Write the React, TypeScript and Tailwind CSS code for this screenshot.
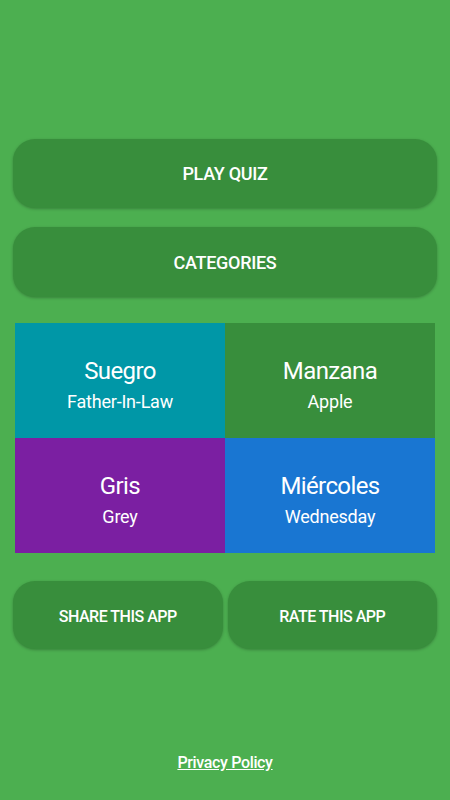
import React from "react";

const cells = [
  { es: "Suegro", en: "Father-In-Law", bg: "bg-[#0097a7]" },
  { es: "Manzana", en: "Apple", bg: "bg-[#388e3c]" },
  { es: "Gris", en: "Grey", bg: "bg-[#7b1fa2]" },
  { es: "Miércoles", en: "Wednesday", bg: "bg-[#1976d2]" },
];

export default function App() {
  return (
    <div
      className="w-[450px] h-[800px] bg-[#4caf50] flex flex-col px-[13px] text-white"
      style={{ fontFamily: "Roboto, 'Liberation Sans', sans-serif" }}
    >
      <div className="h-[139px]" />
      <button className="h-[69px] w-full rounded-[22px] bg-[#388e3c] shadow-[0_1px_3px_rgba(0,0,0,0.25)] text-[18px] tracking-[-0.3px] font-medium uppercase">
        Play Quiz
      </button>
      <button className="mt-[19px] h-[70px] w-full rounded-[22px] bg-[#388e3c] shadow-[0_1px_3px_rgba(0,0,0,0.25)] text-[18px] tracking-[-0.3px] font-medium uppercase">
        Categories
      </button>
      <div className="mt-[26px] mx-[2px] grid grid-cols-2">
        {cells.map((c) => (
          <div
            key={c.es}
            className={`${c.bg} h-[115px] pt-[10px] flex flex-col items-center justify-center`}
          >
            <div className="text-[24px] leading-[30px] tracking-[-0.6px]">{c.es}</div>
            <div className="text-[18px] leading-[26px] mt-[3px] tracking-[-0.2px]">{c.en}</div>
          </div>
        ))}
      </div>
      <div className="mt-[28px] flex gap-[5px]">
        <button className="flex-1 h-[68px] pt-[3px] rounded-[22px] bg-[#388e3c] shadow-[0_1px_3px_rgba(0,0,0,0.25)] text-[16px] tracking-[-0.5px] font-medium uppercase">
          Share this app
        </button>
        <button className="flex-1 h-[68px] pt-[3px] rounded-[22px] bg-[#388e3c] shadow-[0_1px_3px_rgba(0,0,0,0.25)] text-[16px] tracking-[-0.5px] font-medium uppercase">
          Rate this app
        </button>
      </div>
      <div className="flex-1" />
      <div className="mb-[25px] text-center">
        <a className="text-[16px] tracking-[-0.35px] font-medium underline">Privacy Policy</a>
      </div>
    </div>
  );
}
